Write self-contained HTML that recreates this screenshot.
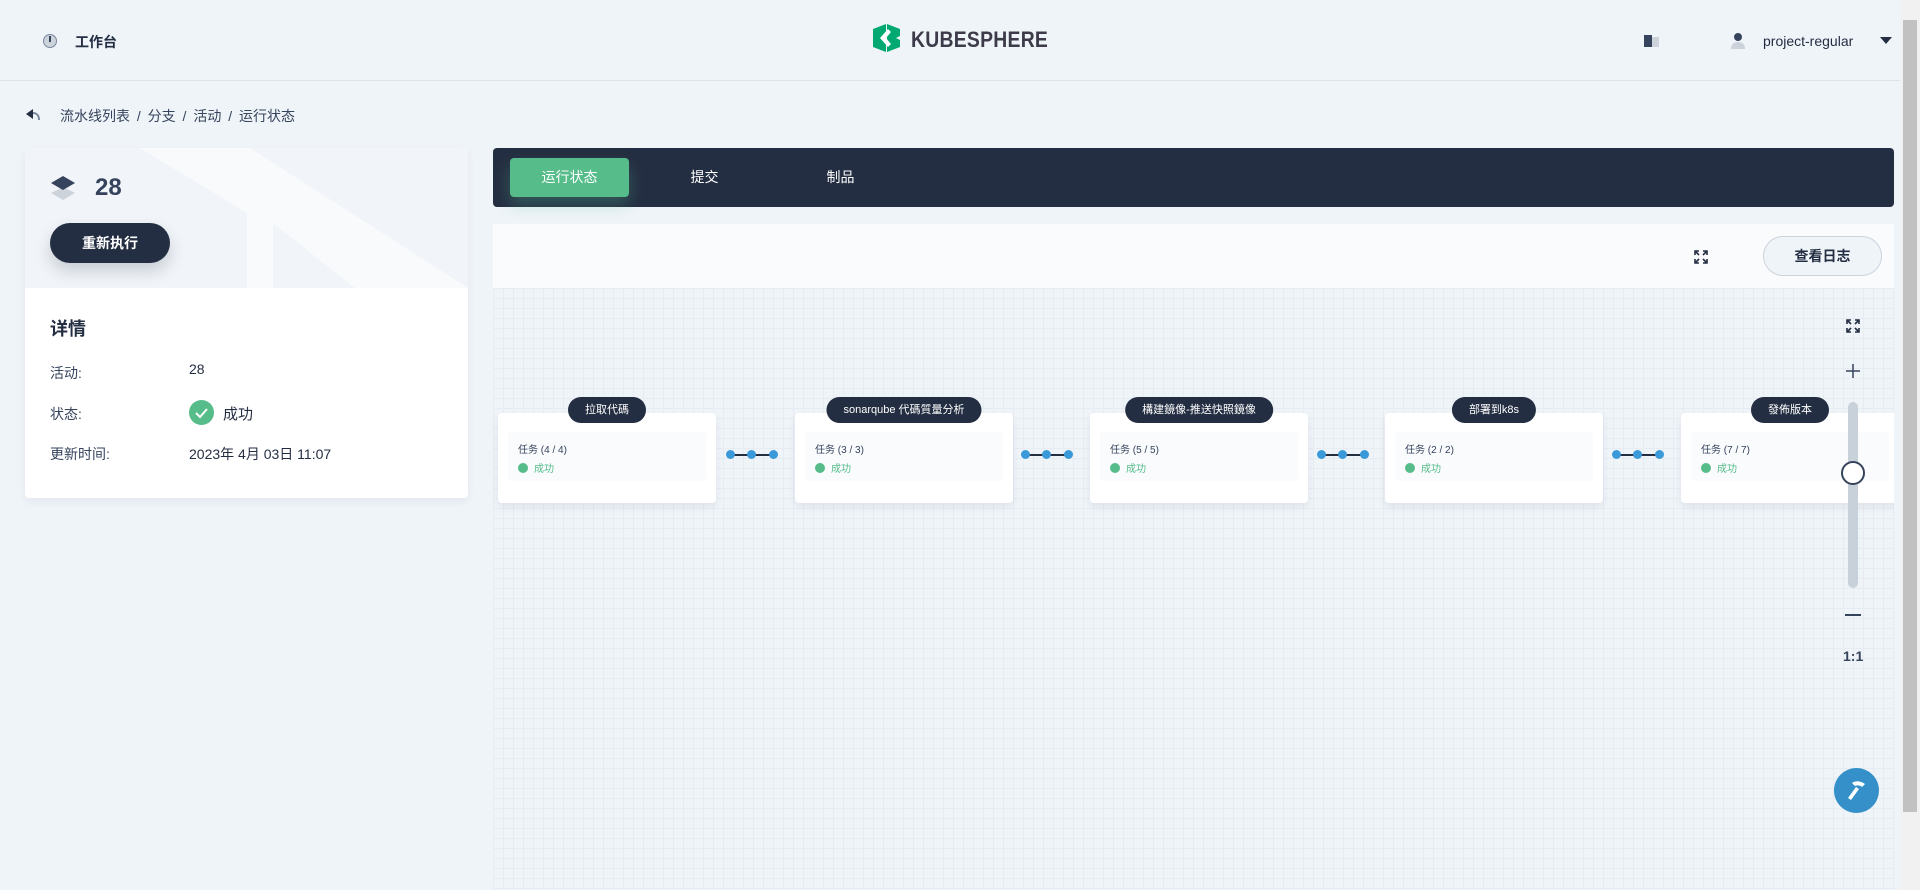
<!DOCTYPE html>
<html><head><meta charset="utf-8"><style>
*{box-sizing:border-box;margin:0;padding:0}
body{width:1920px;height:890px;overflow:hidden;background:#eff4f9;font-family:"Liberation Sans","Noto Sans CJK SC",sans-serif;color:#242e42;position:relative}
.abs{position:absolute}
.hdr{left:0;top:0;width:1900px;height:81px;border-bottom:1px solid #dfe4eb}
.card{background:#fff;border-radius:4px;box-shadow:0 4px 8px rgba(36,46,66,.06)}
.tab{color:#fff;font-size:14px;position:absolute;top:10px;height:39px;line-height:39px;text-align:center;width:119px}
.grid{background-color:#eff4f9;background-image:linear-gradient(#e6ecf2 1px,transparent 1px),linear-gradient(90deg,#e6ecf2 1px,transparent 1px);background-size:10px 10px}
.node{position:absolute;top:413px;width:218px;height:90px;background:#fff;border-radius:4px;box-shadow:0 4px 8px rgba(36,46,66,.08)}
.node .in{position:absolute;left:10px;top:19px;right:10px;height:49px;background:#f9fbfd;border-radius:3px;font-size:10px;color:#36435c;padding:9px 10px}
.node .ok{color:#55bc8a;margin-top:4px;display:flex;align-items:center}
.node .ok i{display:inline-block;width:10px;height:10px;border-radius:50%;background:#55bc8a;margin-right:6px}
.pill{position:absolute;top:-16px;left:50%;transform:translateX(-50%);background:#242e42;color:#fff;font-size:11px;height:26px;line-height:26px;padding:0 17px;border-radius:13px;white-space:nowrap}
.conn{position:absolute;top:450px;width:52px;height:9px}
.conn:before{content:"";position:absolute;left:4px;right:4px;top:3.5px;height:2px;background:#242e42}
.conn i{position:absolute;top:0;width:9px;height:9px;border-radius:50%;background:#3a9ad9}
</style></head><body>
<div class="abs hdr"></div>
<svg class="abs" style="left:42px;top:33px" width="16" height="16" viewBox="0 0 16 16"><circle cx="8" cy="8" r="6.5" fill="#ccd3db" stroke="#79879c"/><path d="M8 3v6" stroke="#36435c" stroke-width="2"/></svg>
<div class="abs" style="left:75px;top:32px;font-size:14px;font-weight:bold">工作台</div>
<svg class="abs" style="left:871px;top:24px" width="31" height="28" viewBox="0 0 31 28"><path d="M2 5l13-5v28L2 23z" fill="#00a971"/><path d="M16 0l13 5v7l-4 2 4 2v7l-13 5z" fill="#00a971"/><path d="M17 5l-8 9 8 9 3-3-5-6 5-6z" fill="#fff"/></svg>
<div class="abs" style="left:911px;top:27px;font-size:22px;font-weight:bold;color:#3d3b49;letter-spacing:0.3px;transform:scaleX(.88);transform-origin:left">KUBESPHERE</div>
<svg class="abs" style="left:1644px;top:34px" width="16" height="14" viewBox="0 0 16 14"><rect x="0" y="1" width="8" height="12" fill="#36435c"/><rect x="8" y="3" width="7" height="10" fill="#ccd3db"/></svg>
<svg class="abs" style="left:1730px;top:32px" width="16" height="18" viewBox="0 0 16 18"><circle cx="8" cy="5" r="4" fill="#36435c"/><path d="M1 17c0-5 3-7 7-7s7 2 7 7z" fill="#ccd3db"/></svg>
<div class="abs" style="left:1763px;top:33px;font-size:14px;color:#242e42">project-regular</div>
<svg class="abs" style="left:1880px;top:37px" width="12" height="8"><path d="M0 0h12L6 7z" fill="#242e42"/></svg>
<div class="abs" style="left:1900px;top:0;width:20px;height:890px;background:#f1f1f1"></div>
<div class="abs" style="left:1903px;top:20px;width:14px;height:792px;background:#c1c1c1"></div>
<svg class="abs" style="left:25px;top:108px" width="16" height="14"><path d="M1 6l7-5v10z" fill="#242e42"/><path d="M8 5c4 0 6 3 6 7" stroke="#79879c" fill="none" stroke-width="2"/></svg>
<div class="abs" style="left:60px;top:106px;font-size:14px;color:#36435c;word-spacing:3px">流水线列表 / 分支 / 活动 / 运行状态</div>
<div class="abs card" style="left:25px;top:148px;width:443px;height:350px;overflow:hidden">
 <div class="abs" style="left:0;top:0;width:443px;height:140px;background:#f1f5f9"></div>
 <svg class="abs" style="left:0;top:0" width="443" height="140"><path d="M110 0h140l193 140H300L223 80v60H110l65-140z" fill="#f7f9fb" opacity="0"/><path d="M112 40l45-40h95l-40 40 90 100H440L300 0h-48z" fill="#f8fafc" opacity="0"/><path d="M115 0h110l218 140H330L248 75v65H222V65z" fill="#f8fafc"/></svg>
 <svg class="abs" style="left:24px;top:27px" width="28" height="28" viewBox="0 0 28 28"><path d="M14 12l12 6-12 7-12-7z" fill="#ccd3db"/><path d="M14 1l12 7-12 7-12-7z" fill="#36435c"/></svg>
 <div class="abs" style="left:70px;top:26px;font-size:24px;font-weight:bold;color:#36435c">28</div>
 <div class="abs" style="left:25px;top:75px;width:120px;height:40px;border-radius:20px;background:#242e42;color:#fff;font-size:14px;font-weight:bold;text-align:center;line-height:40px;box-shadow:0 8px 16px rgba(36,46,66,.2)">重新执行</div>
 <div class="abs" style="left:25px;top:167px;font-size:18px;font-weight:bold">详情</div>
 <div class="abs" style="left:25px;top:215px;font-size:14px;color:#36435c">活动:</div>
 <div class="abs" style="left:164px;top:213px;font-size:14px">28</div>
 <div class="abs" style="left:25px;top:256px;font-size:14px;color:#36435c">状态:</div>
 <svg class="abs" style="left:164px;top:252px" width="25" height="25"><circle cx="12.5" cy="12.5" r="12.5" fill="#55bc8a"/><path d="M7 13l4 4 7-8" stroke="#fff" stroke-width="2" fill="none"/></svg>
 <div class="abs" style="left:198px;top:255px;font-size:15px">成功</div>
 <div class="abs" style="left:25px;top:296px;font-size:14px;color:#36435c">更新时间:</div>
 <div class="abs" style="left:164px;top:296px;font-size:14px">2023年 4月 03日 11:07</div>
</div>
<div class="abs" style="left:493px;top:148px;width:1401px;height:59px;background:#242e42;border-radius:4px">
 <div class="tab" style="left:17px;background:#55bc8a;border-radius:4px;box-shadow:0 8px 16px rgba(85,188,138,.3)">运行状态</div>
 <div class="tab" style="left:152px">提交</div>
 <div class="tab" style="left:288px">制品</div>
</div>
<div class="abs" style="left:493px;top:224px;width:1401px;height:64px;background:#f9fbfd"></div>
<svg class="abs" style="left:1694px;top:250px" width="14" height="14" viewBox="0 0 14 14" stroke="#242e42" stroke-width="1.6" fill="none"><path d="M1 5V1h4M9 1h4v4M13 9v4H9M5 13H1V9M1 1l4 4M13 1L9 5M13 13L9 9M1 13l4-4"/></svg>
<div class="abs" style="left:1763px;top:236px;width:119px;height:40px;border:1px solid #ccd3db;border-radius:20px;background:#eff4f9;text-align:center;line-height:38px;font-size:14px;font-weight:bold">查看日志</div>
<div class="abs grid" style="left:493px;top:288px;width:1401px;height:602px;overflow:hidden"></div>
<div class="abs" style="left:0;top:0;width:1894px;height:890px;overflow:hidden;pointer-events:none">
 <div class="node" style="left:498px"><div class="pill">拉取代碼</div><div class="in">任务 (4 / 4)<div class="ok"><i></i>成功</div></div></div>
 <div class="node" style="left:795px"><div class="pill">sonarqube 代碼質量分析</div><div class="in">任务 (3 / 3)<div class="ok"><i></i>成功</div></div></div>
 <div class="node" style="left:1090px"><div class="pill">構建鏡像-推送快照鏡像</div><div class="in">任务 (5 / 5)<div class="ok"><i></i>成功</div></div></div>
 <div class="node" style="left:1385px"><div class="pill">部署到k8s</div><div class="in">任务 (2 / 2)<div class="ok"><i></i>成功</div></div></div>
 <div class="node" style="left:1681px"><div class="pill">發佈版本</div><div class="in">任务 (7 / 7)<div class="ok"><i></i>成功</div></div></div>
 <div class="conn" style="left:726px"><i style="left:0"></i><i style="left:21px"></i><i style="left:43px"></i></div>
 <div class="conn" style="left:1021px"><i style="left:0"></i><i style="left:21px"></i><i style="left:43px"></i></div>
 <div class="conn" style="left:1317px"><i style="left:0"></i><i style="left:21px"></i><i style="left:43px"></i></div>
 <div class="conn" style="left:1612px"><i style="left:0"></i><i style="left:21px"></i><i style="left:43px"></i></div>
</div>
<svg class="abs" style="left:1846px;top:319px" width="14" height="14" viewBox="0 0 14 14" stroke="#242e42" stroke-width="1.6" fill="none"><path d="M1 5V1h4M9 1h4v4M13 9v4H9M5 13H1V9M1 1l4 4M13 1L9 5M13 13L9 9M1 13l4-4"/></svg>
<svg class="abs" style="left:1845px;top:363px" width="16" height="16" stroke="#36435c" stroke-width="1.5"><path d="M8 1v14M1 8h14"/></svg>
<div class="abs" style="left:1848px;top:402px;width:10px;height:186px;border-radius:5px;background:#c8d0da"></div>
<div class="abs" style="left:1841px;top:461px;width:24px;height:24px;border-radius:50%;background:#fff;border:2px solid #36435c"></div>
<div class="abs" style="left:1845px;top:614px;width:16px;height:2px;background:#36435c"></div>
<div class="abs" style="left:1843px;top:648px;font-size:14px;font-weight:bold;color:#36435c">1:1</div>
<div class="abs" style="left:1834px;top:768px;width:45px;height:45px;border-radius:50%;background:#3590c9"></div>
<svg class="abs" style="left:1844px;top:777px" width="26" height="26" viewBox="0 0 26 26"><path d="M8 6c4-3 9-2 13 1l-3 3c-2-2-5-2-7-1z" fill="#fff"/><path d="M12 10l3 2-8 11-3-2z" fill="#fff"/></svg>
</body></html>
